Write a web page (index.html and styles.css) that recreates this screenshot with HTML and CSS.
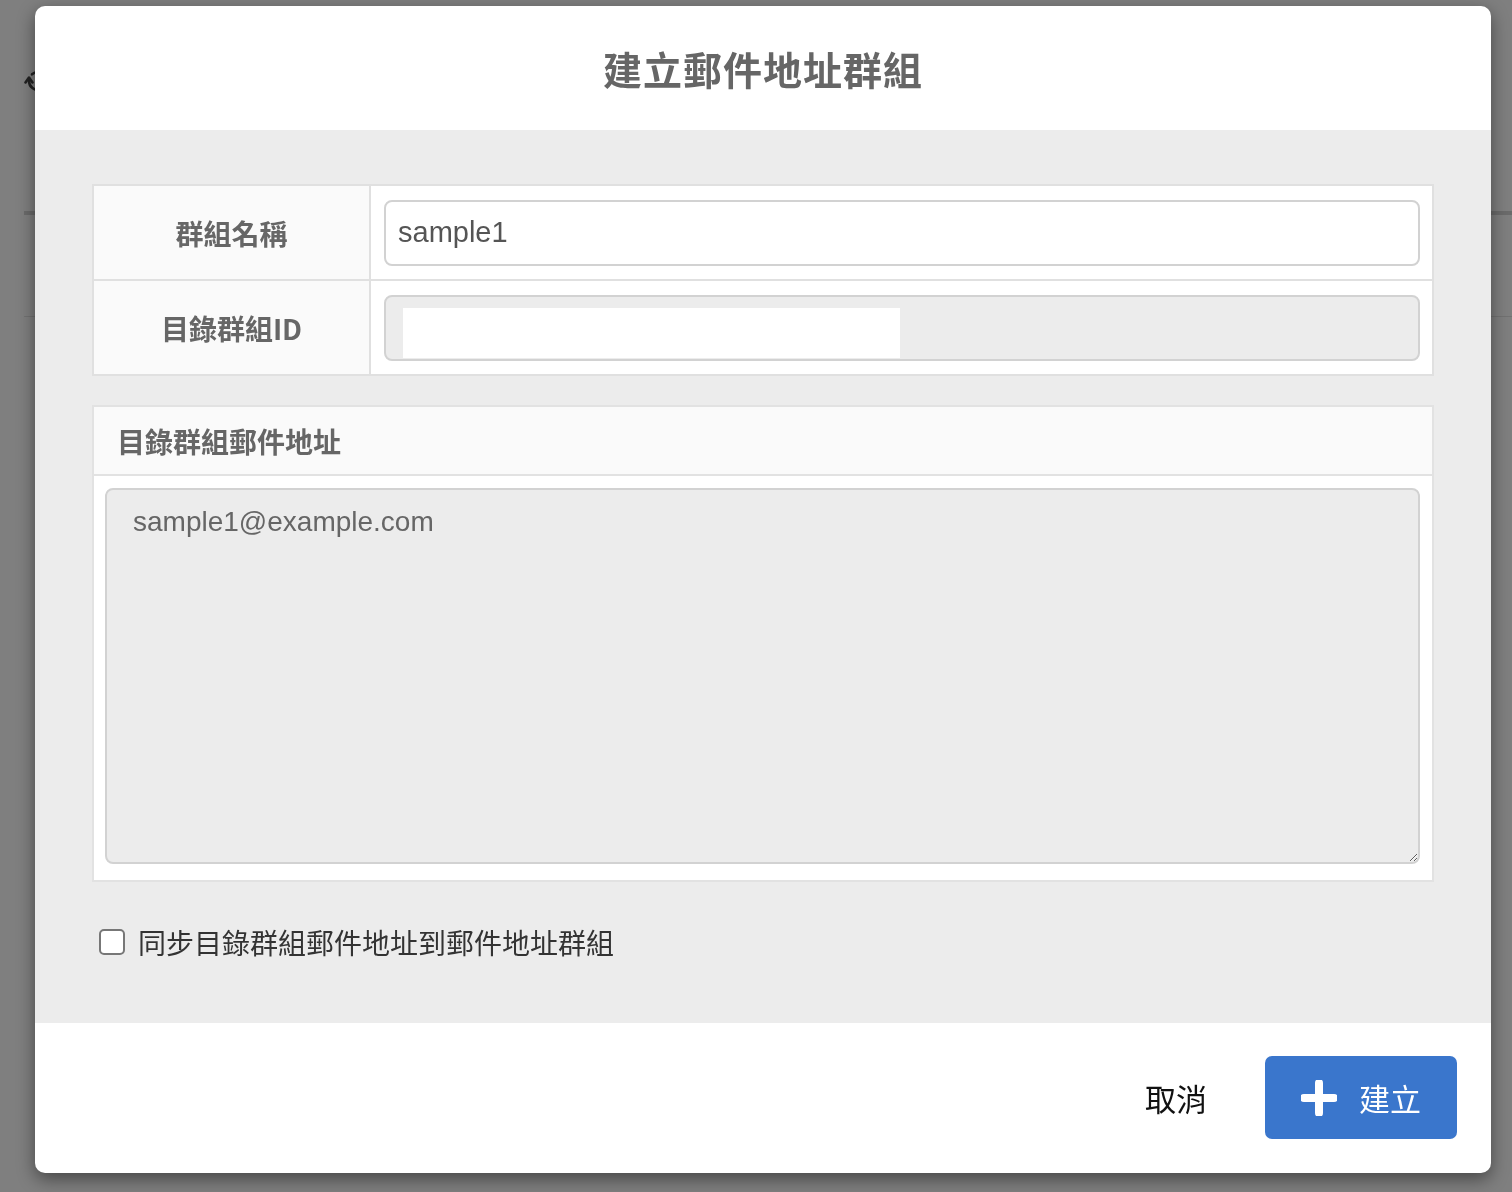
FILE: index.html
```html
<!DOCTYPE html>
<html lang="zh-Hant">
<head>
    <meta charset="UTF-8">
    <title>建立郵件地址群組</title>
    <link rel="stylesheet" href="styles.css">
</head>
<body>
    <div class="page">
        <div class="page-toolbar">
            <svg class="refresh-icon" viewBox="0 0 28 28" width="28" height="28">
                <path d="M5 14a9 9 0 1 0 3-6.7" fill="none" stroke="#222" stroke-width="2.6" stroke-linecap="round"/>
                <path d="M1.5 15.5L5 10.5l3.5 5" fill="none" stroke="#222" stroke-width="2.6" stroke-linecap="round" stroke-linejoin="round"/>
            </svg>
        </div>
        <div class="page-tabs"></div>
        <div class="page-row"></div>
    </div>

    <div class="modal">
        <div class="modal-header">
            <h2 class="modal-title">建立郵件地址群組</h2>
        </div>
        <div class="modal-body">
            <table class="form-table">
                <tr>
                    <th>群組名稱</th>
                    <td><input type="text" class="form-input" value="sample1"></td>
                </tr>
                <tr>
                    <th>目錄群組ID</th>
                    <td>
                        <div class="form-input disabled">
                            <span class="id-field"></span>
                        </div>
                    </td>
                </tr>
            </table>

            <div class="panel">
                <div class="panel-heading">目錄群組郵件地址</div>
                <div class="panel-body">
                    <textarea class="address-list" disabled>sample1@example.com</textarea>
                </div>
            </div>

            <label class="sync-option">
                <input type="checkbox" class="sync-check">
                <span>同步目錄群組郵件地址到郵件地址群組</span>
            </label>
        </div>
        <div class="modal-footer">
            <button class="btn-cancel">取消</button>
            <button class="btn-create">
                <svg class="plus-icon" viewBox="0 0 36 36" width="36" height="36">
                    <path d="M18 3v30M3 18h30" stroke="#fff" stroke-width="8" stroke-linecap="round"/>
                </svg>
                <span>建立</span>
            </button>
        </div>
    </div>
</body>
</html>
```

FILE: styles.css
```css
body, html {
    margin: 0;
    padding: 0;
    height: 100%;
    background-color: #7f7f7f;
    font-family: 'Liberation Sans', 'Noto Sans CJK TC', sans-serif;
    overflow: hidden;
}
.page {
    padding-left: 24px;
}
.page-toolbar {
    height: 211px;
    padding-top: 67px;
    box-sizing: border-box;
}
.refresh-icon {
    display: block;
}
.page-tabs {
    height: 4px;
    background: #6b6b6b;
}
.page-row {
    margin-top: 101px;
    height: 1px;
    background: #727272;
}
.modal {
    position: fixed;
    top: 6px;
    left: 35px;
    width: 1456px;
    height: 1167px;
    background: #fff;
    border-radius: 10px;
    box-shadow: 0 6px 18px rgba(0,0,0,0.45);
    display: flex;
    flex-direction: column;
    overflow: hidden;
}
.modal-header {
    height: 124px;
    display: flex;
    align-items: center;
    justify-content: center;
}
.modal-title {
    margin: 0;
    font-family: 'Noto Sans CJK TC', sans-serif;
    font-size: 39px;
    font-weight: bold;
    color: #666;
    letter-spacing: 1px;
}
.modal-body {
    height: 893px;
    background: #ececec;
    padding: 54px 57px 0;
    box-sizing: border-box;
}
.form-table {
    width: 100%;
    border-collapse: collapse;
    background: #fff;
}
.form-table th, .form-table td {
    border: 2px solid #e0e0e0;
    height: 95px;
    box-sizing: border-box;
}
.form-table th {
    width: 277px;
    background: #fafafa;
    font-family: 'Noto Sans CJK TC', sans-serif;
    font-size: 28px;
    font-weight: bold;
    color: #666;
}
.form-table td {
    padding: 12px 12px 12px 13px;
}
.form-input {
    display: block;
    width: 100%;
    height: 66px;
    box-sizing: border-box;
    border: 2px solid #d2d2d2;
    border-radius: 8px;
    padding: 0 12px;
    font-family: 'Liberation Sans', 'Noto Sans CJK TC', sans-serif;
    font-size: 29px;
    color: #555;
    background: #fff;
    outline: none;
}
.form-input.disabled {
    background: #ececec;
    padding: 11px 17px;
}
.id-field {
    display: block;
    width: 497px;
    height: 50px;
    background: #fff;
}
.panel {
    margin-top: 29px;
    border: 2px solid #e2e2e2;
    background: #fff;
}
.panel-heading {
    height: 69px;
    box-sizing: border-box;
    background: #fafafa;
    border-bottom: 2px solid #e2e2e2;
    padding: 0 23px;
    display: flex;
    align-items: center;
    font-family: 'Noto Sans CJK TC', sans-serif;
    font-size: 28px;
    font-weight: bold;
    color: #666;
}
.panel-body {
    padding: 12px 12px 16px 11px;
}
.address-list {
    display: block;
    width: 100%;
    height: 376px;
    box-sizing: border-box;
    border: 2px solid #d2d2d2;
    border-radius: 8px;
    background: #ececec;
    padding: 16px 26px;
    font-family: 'Liberation Sans', 'Noto Sans CJK TC', sans-serif;
    font-size: 28px;
    color: #666;
    resize: vertical;
}
.sync-option {
    display: flex;
    align-items: center;
    margin-top: 40px;
    margin-left: 7px;
    font-family: 'Noto Sans CJK TC', sans-serif;
    font-size: 28px;
    color: #333;
}
.sync-check {
    appearance: none;
    width: 26px;
    height: 26px;
    margin: 0 13px 0 0;
    border: 2px solid #777;
    border-radius: 5px;
    background: #fff;
}
.modal-footer {
    flex: 1;
    display: flex;
    align-items: flex-start;
    justify-content: flex-end;
    padding: 33px 34px 0 0;
}
.btn-cancel {
    border: none;
    background: none;
    font-family: 'Noto Sans CJK TC', sans-serif;
    font-size: 31px;
    color: #111;
    height: 83px;
    padding: 0;
    margin-right: 58px;
    cursor: pointer;
}
.btn-create {
    width: 192px;
    height: 83px;
    border: none;
    border-radius: 7px;
    background: #3a76cc;
    color: #fff;
    font-family: 'Noto Sans CJK TC', sans-serif;
    font-size: 31px;
    display: flex;
    align-items: center;
    justify-content: center;
    gap: 22px;
    cursor: pointer;
}
```
